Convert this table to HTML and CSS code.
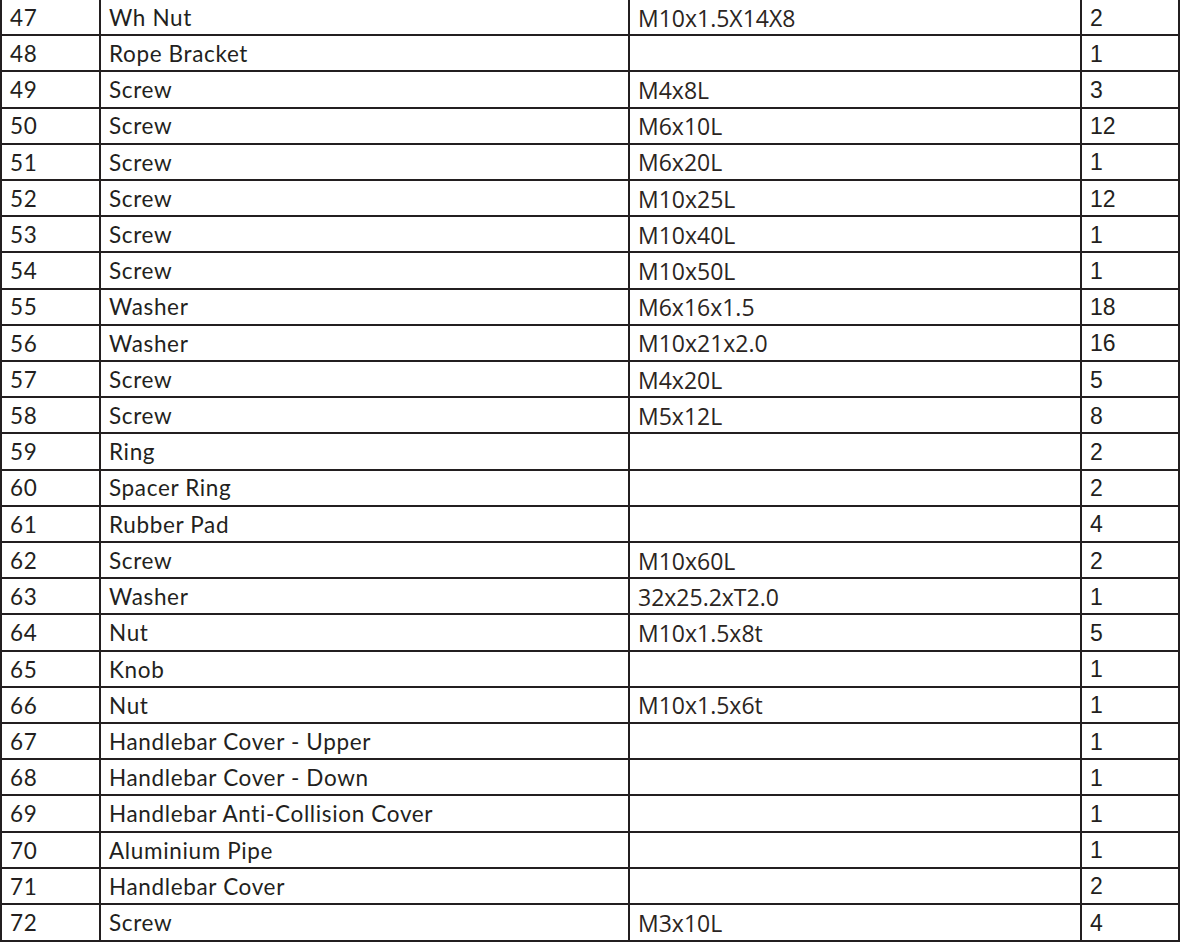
FILE: index.html
```html
<!DOCTYPE html>
<html lang="en">
<head>
<meta charset="utf-8">
<title>Parts list</title>
<link rel="stylesheet" href="styles.css">
</head>
<body>
<table class="parts">
<colgroup><col class="c-no"><col class="c-name"><col class="c-spec"><col class="c-qty"></colgroup>
<tbody>
<tr><td class="no">47</td><td class="name">Wh Nut</td><td class="spec">M10x1.5X14X8</td><td class="qty">2</td></tr>
<tr><td class="no">48</td><td class="name">Rope Bracket</td><td class="spec"></td><td class="qty">1</td></tr>
<tr><td class="no">49</td><td class="name">Screw</td><td class="spec">M4x8L</td><td class="qty">3</td></tr>
<tr><td class="no">50</td><td class="name">Screw</td><td class="spec">M6x10L</td><td class="qty">12</td></tr>
<tr><td class="no">51</td><td class="name">Screw</td><td class="spec">M6x20L</td><td class="qty">1</td></tr>
<tr><td class="no">52</td><td class="name">Screw</td><td class="spec">M10x25L</td><td class="qty">12</td></tr>
<tr><td class="no">53</td><td class="name">Screw</td><td class="spec">M10x40L</td><td class="qty">1</td></tr>
<tr><td class="no">54</td><td class="name">Screw</td><td class="spec">M10x50L</td><td class="qty">1</td></tr>
<tr><td class="no">55</td><td class="name">Washer</td><td class="spec">M6x16x1.5</td><td class="qty">18</td></tr>
<tr><td class="no">56</td><td class="name">Washer</td><td class="spec">M10x21x2.0</td><td class="qty">16</td></tr>
<tr><td class="no">57</td><td class="name">Screw</td><td class="spec">M4x20L</td><td class="qty">5</td></tr>
<tr><td class="no">58</td><td class="name">Screw</td><td class="spec">M5x12L</td><td class="qty">8</td></tr>
<tr><td class="no">59</td><td class="name">Ring</td><td class="spec"></td><td class="qty">2</td></tr>
<tr><td class="no">60</td><td class="name">Spacer Ring</td><td class="spec"></td><td class="qty">2</td></tr>
<tr><td class="no">61</td><td class="name">Rubber Pad</td><td class="spec"></td><td class="qty">4</td></tr>
<tr><td class="no">62</td><td class="name">Screw</td><td class="spec">M10x60L</td><td class="qty">2</td></tr>
<tr><td class="no">63</td><td class="name">Washer</td><td class="spec">32x25.2xT2.0</td><td class="qty">1</td></tr>
<tr><td class="no">64</td><td class="name">Nut</td><td class="spec">M10x1.5x8t</td><td class="qty">5</td></tr>
<tr><td class="no">65</td><td class="name">Knob</td><td class="spec"></td><td class="qty">1</td></tr>
<tr><td class="no">66</td><td class="name">Nut</td><td class="spec">M10x1.5x6t</td><td class="qty">1</td></tr>
<tr><td class="no">67</td><td class="name">Handlebar Cover - Upper</td><td class="spec"></td><td class="qty">1</td></tr>
<tr><td class="no">68</td><td class="name">Handlebar Cover - Down</td><td class="spec"></td><td class="qty">1</td></tr>
<tr><td class="no">69</td><td class="name">Handlebar Anti-Collision Cover</td><td class="spec"></td><td class="qty">1</td></tr>
<tr><td class="no">70</td><td class="name">Aluminium Pipe</td><td class="spec"></td><td class="qty">1</td></tr>
<tr><td class="no">71</td><td class="name">Handlebar Cover</td><td class="spec"></td><td class="qty">2</td></tr>
<tr class="last"><td class="no">72</td><td class="name">Screw</td><td class="spec">M3x10L</td><td class="qty">4</td></tr>
</tbody>
</table>
</body>
</html>
```
FILE: styles.css
```css
html, body {
  margin: 0;
  padding: 0;
  background: #ffffff;
}
body {
  overflow: hidden;
}
.parts {
  margin-top: -2px;
  width: 1180px;
  table-layout: fixed;
  border-collapse: separate;
  border-spacing: 0;
  border-left: 2px solid #231f20;
  border-top: 2px solid #231f20;
  color: #231f20;
}
.c-no { width: 99px; }
.c-name { width: 529px; }
.c-spec { width: 452px; }
.c-qty { width: 98px; }
.parts td {
  box-sizing: border-box;
  height: 36.21px;
  padding: 2px 0 0 8px;
  border-right: 2px solid #231f20;
  border-bottom: 2px solid #231f20;
  vertical-align: middle;
  white-space: nowrap;
  line-height: 1;
}
.parts tr.last td {
  height: 37px;
}
.no, .name {
  font-family: Lato, "Open Sans", sans-serif;
  font-weight: 400;
  font-size: 22.5px;
  letter-spacing: 0.65px;
  padding-top: 3px;
}
.name {
  padding-left: 9px;
}
.spec {
  font-family: "Open Sans", "Liberation Sans", sans-serif;
  font-size: 23px;
  color: #2b2522;
}
.qty {
  font-family: "Liberation Sans", Arial, sans-serif;
  font-size: 23px;
}
```
